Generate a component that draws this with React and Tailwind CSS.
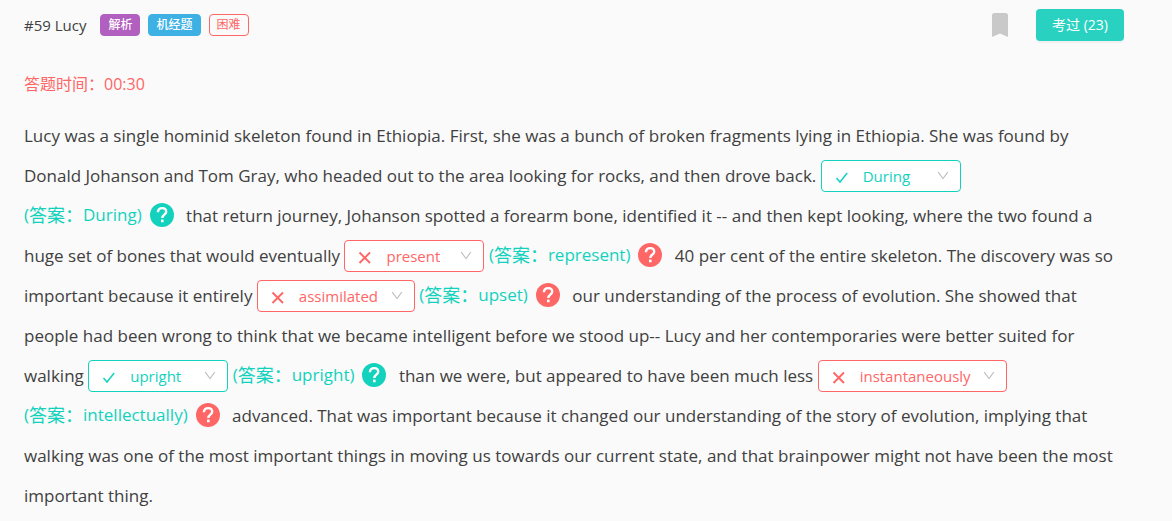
import React from "react";

function HelpIcon({ ok }) {
  return (
    <button
      type="button"
      aria-label="查看解析"
      className={"mx-2 size-6 " + (ok ? "text-[#13d2bd]" : "text-[#ff6666]")}
    >
      <svg viewBox="0 0 24 24" className="block size-6">
        <circle cx="12" cy="12" r="12" fill="currentColor" />
        <path
          d="M7.9 9.2C7.9 6.7 9.7 5.1 12.1 5.1C14.5 5.1 16.2 6.6 16.2 8.7C16.2 11.6 12.3 11.8 12.3 14.9"
          fill="none"
          stroke="#fff"
          strokeWidth="2.4"
        />
        <rect x="11" y="16.6" width="2.6" height="2.7" rx="0.4" fill="#fff" />
      </svg>
    </button>
  );
}

function Blank({ value, answer, ok, breakAfter, width = "w-[140px]" }) {
  return (
    <>
      <span
        className={
          "relative mb-0.5 inline-block h-8 align-middle " + width + " " + (ok ? "text-[#13d2bd]" : "text-[#ff6666]")
        }
      >
        <select
          aria-label="选择答案"
          defaultValue={value}
          className="block h-8 w-full appearance-none rounded border border-current bg-white pl-[41px] pr-6 text-[15px] leading-[30px]"
        >
          <option>{value}</option>
          {answer !== value && <option>{answer}</option>}
        </select>
        <svg
          viewBox="0 0 14 14"
          className="pointer-events-none absolute left-3.5 top-2.5 size-3.5"
          fill="none"
          stroke="currentColor"
        >
          {ok ? (
            <path d="M1.5 8L5 12L12.2 3" strokeWidth="1.5" />
          ) : (
            <path d="M1.5 2.5L12 13M12 2.5L1.5 13" strokeWidth="1.9" />
          )}
        </svg>
        <svg
          viewBox="0 0 12 12"
          className="pointer-events-none absolute right-3 top-2.5 size-3 text-[#bfbfbf]"
          fill="none"
          stroke="currentColor"
        >
          <path d="M1.2 2.2L6 8.6L10.8 2.2" strokeWidth="1.1" />
        </svg>
      </span>{" "}
      {breakAfter && <br className="max-lg:hidden" />}
      <span className="mb-1 inline-flex h-8 items-center whitespace-nowrap align-middle leading-6 text-[#13d2bd]">
        <span>(</span>
        <span className="text-lg leading-6">答案：</span>
        <span>{`${answer})`}</span>
        <HelpIcon ok={ok} />
      </span>{" "}
    </>
  );
}

export default function App() {
  return (
    <main className="min-h-screen bg-[#fafafa] pl-6 pr-12 pt-2 font-['Open_Sans','Noto_Sans_CJK_SC',sans-serif] text-[#404040]">
      <header className="flex h-[34px] items-center">
        <h1 className="text-[15px] leading-6">#59 Lucy</h1>
        <div className="ml-3.5 flex gap-2 text-xs leading-5">
          <span className="rounded border border-[#b160c0] bg-[#b160c0] px-[7px] font-medium text-white">解析</span>
          <span className="rounded border border-[#3eb1e4] bg-[#3eb1e4] px-[7px] font-medium text-white">机经题</span>
          <span className="rounded border border-[#ff6666] px-[7px] text-[#ff6666]">困难</span>
        </div>
        <button type="button" aria-label="收藏" className="ml-auto text-[#c9c9c9]">
          <svg viewBox="0 0 16 24" className="block h-6 w-4" fill="currentColor">
            <path d="M2.5 0H13.5Q16 0 16 2.5V24L8 20.5L0 24V2.5Q0 0 2.5 0Z" />
          </svg>
        </button>
        <button
          type="button"
          className="ml-7 h-8 rounded bg-[#29d2c0] px-4 text-sm text-white shadow-[0_2px_0_rgba(0,0,0,0.04)]"
        >
          考过 (23)
        </button>
      </header>
      <p className="mt-[30px] text-base leading-6 text-[#ff6666]">答题时间：00:30</p>
      <p className="mt-5 text-[17px] leading-10">
        Lucy was a single hominid skeleton found in Ethiopia. First, she was a bunch of broken fragments lying in
        Ethiopia. She was found by Donald Johanson and Tom Gray, who headed out to the area looking for rocks, and then
        drove back. <Blank value="During" answer="During" ok breakAfter />
        that return journey, Johanson spotted a forearm bone, identified it -- and then kept looking, where the two
        found a huge set of bones that would eventually <Blank value="present" answer="represent" />
        40 per cent of the entire skeleton. The discovery was so important because it entirely{" "}
        <Blank value="assimilated" answer="upset" width="w-[158px]" />
        our understanding of the process of evolution. She showed that people had been wrong to think that we became
        intelligent before we stood up-- Lucy and her contemporaries were better suited for walking{" "}
        <Blank value="upright" answer="upright" ok />
        than we were, but appeared to have been much less{" "}
        <Blank value="instantaneously" answer="intellectually" width="w-[189px]" />
        advanced. That was important because it changed our understanding of the story of evolution, implying that
        walking was one of the most important things in moving us towards our current state, and that brainpower might
        not have been the most important thing.
      </p>
    </main>
  );
}
